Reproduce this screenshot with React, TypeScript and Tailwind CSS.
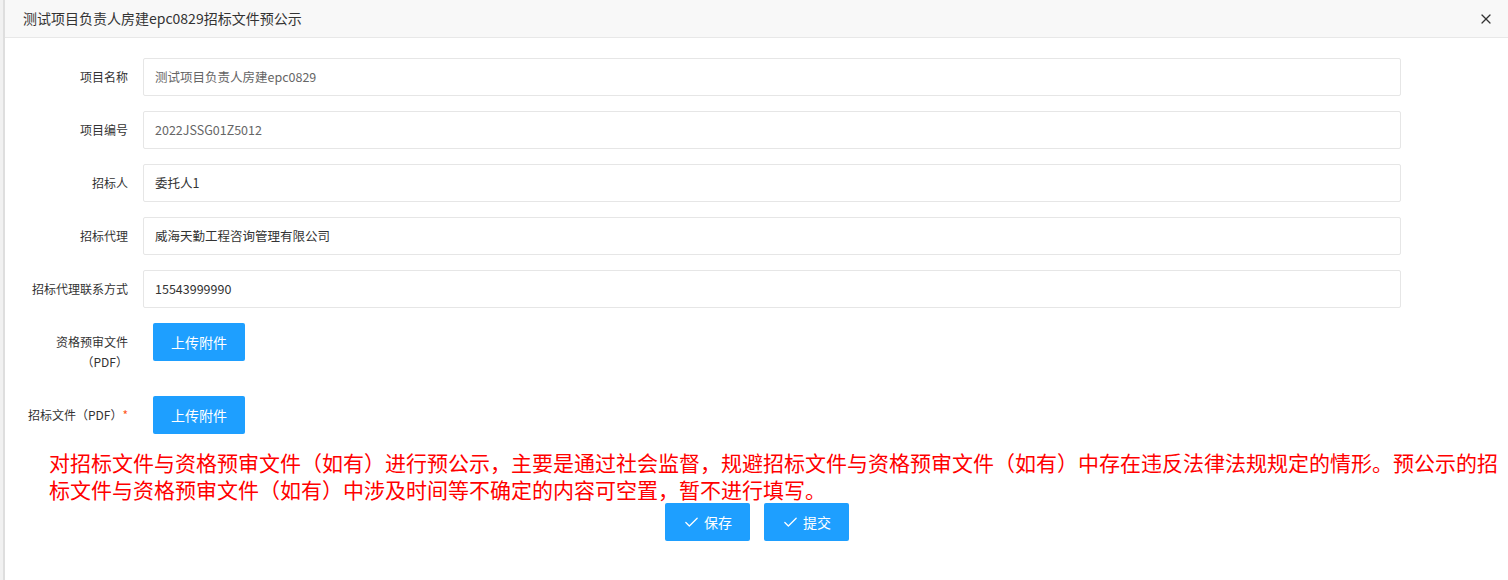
import { Check, X } from 'lucide-react'

const fields = [
  { label: '项目名称', value: '测试项目负责人房建epc0829', muted: true },
  { label: '项目编号', value: '2022JSSG01Z5012', muted: true },
  { label: '招标人', value: '委托人1' },
  { label: '招标代理', value: '威海天勤工程咨询管理有限公司' },
  { label: '招标代理联系方式', value: '15543999990' },
]

function UploadButton() {
  return (
    <button
      type="button"
      className="ml-[10px] h-[38px] w-[92px] shrink-0 rounded-[2px] bg-[#1e9fff] text-[14px] text-white"
    >
      上传附件
    </button>
  )
}

export default function App() {
  return (
    <div
      className="flex h-[580px] w-[1508px] overflow-hidden bg-white text-[#333]"
      style={{ fontFamily: '"Noto Sans CJK SC", "Noto Sans", sans-serif' }}
    >
      <div className="w-[3px] shrink-0 bg-[#f1f1f1]" />
      <div className="w-[2px] shrink-0 bg-[#dedede]" />
      <div className="flex min-w-0 flex-1 flex-col">
        <div className="flex h-[38px] shrink-0 items-center justify-between border-b border-[#e8e8e8] bg-[#f8f8f8] pl-[18px] pr-[14px]">
          <span className="text-[14px] text-[#333]">测试项目负责人房建epc0829招标文件预公示</span>
          <X size={16} strokeWidth={1.8} className="text-[#333]" />
        </div>

        <div className="pt-[20px]">
          {fields.map((f) => (
            <div key={f.label} className="mb-[15px] flex">
              <label className="w-[138px] shrink-0 py-[9px] pr-[15px] text-right text-[12px] leading-[20px]">
                {f.label}
              </label>
              <div
                className={`mr-[107px] flex h-[38px] flex-1 items-center rounded-[2px] border border-[#e6e6e6] pl-[11px] text-[12.5px] ${
                  f.muted ? 'text-[#666]' : 'text-[#333]'
                }`}
              >
                {f.value}
              </div>
            </div>
          ))}

          <div className="mb-[15px] flex">
            <label className="w-[138px] shrink-0 py-[9px] pl-[15px] pr-[15px] text-right text-[12px] leading-[20px]">
              资格预审文件（PDF）
            </label>
            <UploadButton />
          </div>

          <div className="mb-[15px] flex">
            <label className="w-[138px] shrink-0 py-[9px] pr-[15px] text-right text-[12px] leading-[20px]">
              招标文件（PDF）<span className="text-[#ff5722]">*</span>
            </label>
            <UploadButton />
          </div>

          <p className="ml-[44px] text-[21px] leading-[27px] text-[#ff0000]">
            对招标文件与资格预审文件（如有）进行预公示，主要是通过社会监督，规避招标文件与资格预审文件（如有）中存在违反法律法规规定的情形。预公示的招标文件与资格预审文件（如有）中涉及时间等不确定的内容可空置，暂不进行填写。
          </p>

          <div className="flex justify-center gap-[14px] pl-[1px]">
            {['保存', '提交'].map((t) => (
              <button
                key={t}
                type="button"
                className="flex h-[38px] w-[85px] items-center justify-center gap-[4px] rounded-[2px] bg-[#1e9fff] text-[14px] text-white"
              >
                <Check size={17} strokeWidth={1.8} />
                {t}
              </button>
            ))}
          </div>
        </div>
      </div>
    </div>
  )
}
